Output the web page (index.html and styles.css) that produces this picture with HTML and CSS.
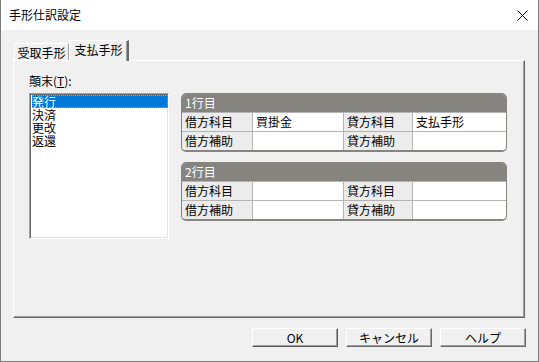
FILE: index.html
```html
<!DOCTYPE html>
<html lang="ja">
<head>
<meta charset="utf-8">
<link rel="stylesheet" href="styles.css">
</head>
<body>
<div class="window">
  <div class="titlebar">
    <span class="title">手形仕訳設定</span>
    <svg class="close" width="11" height="11" viewBox="0 0 11 11"><path d="M0.5 0.5 L10.5 10.5 M10.5 0.5 L0.5 10.5" stroke="#000" stroke-width="1" fill="none"/></svg>
  </div>
  <div class="tabs">
    <div class="tab">受取手形</div>
    <div class="tab active">支払手形</div>
  </div>
  <div class="panel">
    <div class="panel-grid">
      <div class="label">顛末(<u>T</u>):</div>
      <div class="listbox">
        <div class="item selected">発行</div>
        <div class="item">決済</div>
        <div class="item">更改</div>
        <div class="item">返還</div>
      </div>
      <div class="groups">
        <div class="group">
          <div class="ghead">1行目</div>
          <div class="grow">
            <div class="cell lab">借方科目</div>
            <div class="cell val">買掛金</div>
            <div class="cell lab">貸方科目</div>
            <div class="cell val">支払手形</div>
          </div>
          <div class="grow">
            <div class="cell lab">借方補助</div>
            <div class="cell val"></div>
            <div class="cell lab">貸方補助</div>
            <div class="cell val"></div>
          </div>
        </div>
        <div class="group">
          <div class="ghead">2行目</div>
          <div class="grow">
            <div class="cell lab">借方科目</div>
            <div class="cell val"></div>
            <div class="cell lab">貸方科目</div>
            <div class="cell val"></div>
          </div>
          <div class="grow">
            <div class="cell lab">借方補助</div>
            <div class="cell val"></div>
            <div class="cell lab">貸方補助</div>
            <div class="cell val"></div>
          </div>
        </div>
      </div>
    </div>
  </div>
  <div class="buttons">
    <div class="btn default">OK</div>
    <div class="btn">キャンセル</div>
    <div class="btn">ヘルプ</div>
  </div>
</div>
</body>
</html>
```
FILE: styles.css
```css
* { box-sizing: border-box; }
html, body { margin: 0; padding: 0; background: #f0f0f0; }
body {
  font-family: "Noto Sans CJK JP", "Noto Sans", sans-serif;
  font-size: 12px;
  color: #000;
}
.window {
  width: 539px;
  height: 362px;
  background: #f0f0f0;
  border: 1px solid #7a7a7a;
  border-top: none;
  display: flex;
  flex-direction: column;
}
.titlebar {
  height: 30px;
  background: #fff;
  display: flex;
  align-items: center;
  justify-content: space-between;
  padding: 0 10px 0 8px;
  flex: none;
}
.title { font-size: 12px; line-height: 14px; }
.close { display: block; margin-top: 1px; }
.tabs {
  display: flex;
  align-items: flex-end;
  margin-top: 10px;
  padding-left: 13px;
  height: 20px;
  flex: none;
}
.tab {
  height: 17px;
  width: 55px;
  line-height: 17px;
  text-align: center;
  background: #f0f0f0;
  border-top: 1px solid #fff;
  border-left: 1px solid #fff;
  border-right: 1px solid #a0a0a0;
}
.tab.active {
  position: relative;
  z-index: 1;
  height: 21px;
  width: 60px;
  margin-bottom: -1px;
  line-height: 18px;
  border-right: 2px solid #696969;
  box-shadow: inset -1px 0 0 #a0a0a0;
}
.panel {
  margin-left: 12px;
  width: 512px;
  height: 258px;
  flex: none;
  background: #f0f0f0;
  border-top: 1px solid #fff;
  border-left: 1px solid #fff;
  border-right: 1px solid #696969;
  border-bottom: 1px solid #696969;
  box-shadow: inset -1px -1px 0 #a0a0a0;
  padding: 13px 0 0 15px;
}
.panel-grid {
  display: grid;
  grid-template-columns: 140px 326px;
  column-gap: 12px;
  row-gap: 6px;
}
.label {
  grid-column: 1 / 3;
  line-height: 13px;
  height: 13px;
}
.listbox {
  width: 140px;
  height: 146px;
  background: #fff;
  border: 1px solid;
  border-color: #a0a0a0 #fff #fff #a0a0a0;
  box-shadow: inset 1px 1px 0 #696969, inset -1px -1px 0 #e3e3e3;
  padding: 1px 0 0 2px;
}
.item {
  height: 13px;
  line-height: 13px;
  font-size: 12px;
  width: 136px;
}
.item.selected {
  background: #0078d7;
  color: #fff;
  outline: 1px dotted #f68b2a;
  outline-offset: -1px;
}
.groups {
  display: flex;
  flex-direction: column;
  gap: 10px;
}
.group {
  width: 326px;
  border: 1px solid #86857f;
  border-bottom: 2px solid #86857f;
  border-radius: 5px;
  overflow: hidden;
  background: #fff;
}
.ghead {
  height: 18px;
  background: #85847f;
  color: #fff;
  line-height: 18px;
  padding-left: 3px;
}
.grow {
  display: grid;
  grid-template-columns: 70px 91px 69px 94px;
  height: 19px;
  border-top: 1px solid #b4b4b4;
}
.cell {
  line-height: 18px;
  padding-left: 3px;
  border-left: 1px solid #b4b4b4;
}
.cell:first-child { border-left: none; }
.cell.lab { background: #ececec; }
.cell.val { background: #fff; padding-left: 3px; }
.buttons {
  display: flex;
  justify-content: flex-end;
  gap: 8px;
  margin-top: 10px;
  padding-right: 12px;
}
.btn {
  width: 86px;
  height: 19px;
  line-height: 17px;
  text-align: center;
  background: #f0f0f0;
  border: 1px solid;
  border-color: #fff #696969 #696969 #fff;
  box-shadow: inset -1px -1px 0 #a0a0a0;
}
.btn.default {
  border-color: #fff #5a5a5a #5a5a5a #fff;
}
```
